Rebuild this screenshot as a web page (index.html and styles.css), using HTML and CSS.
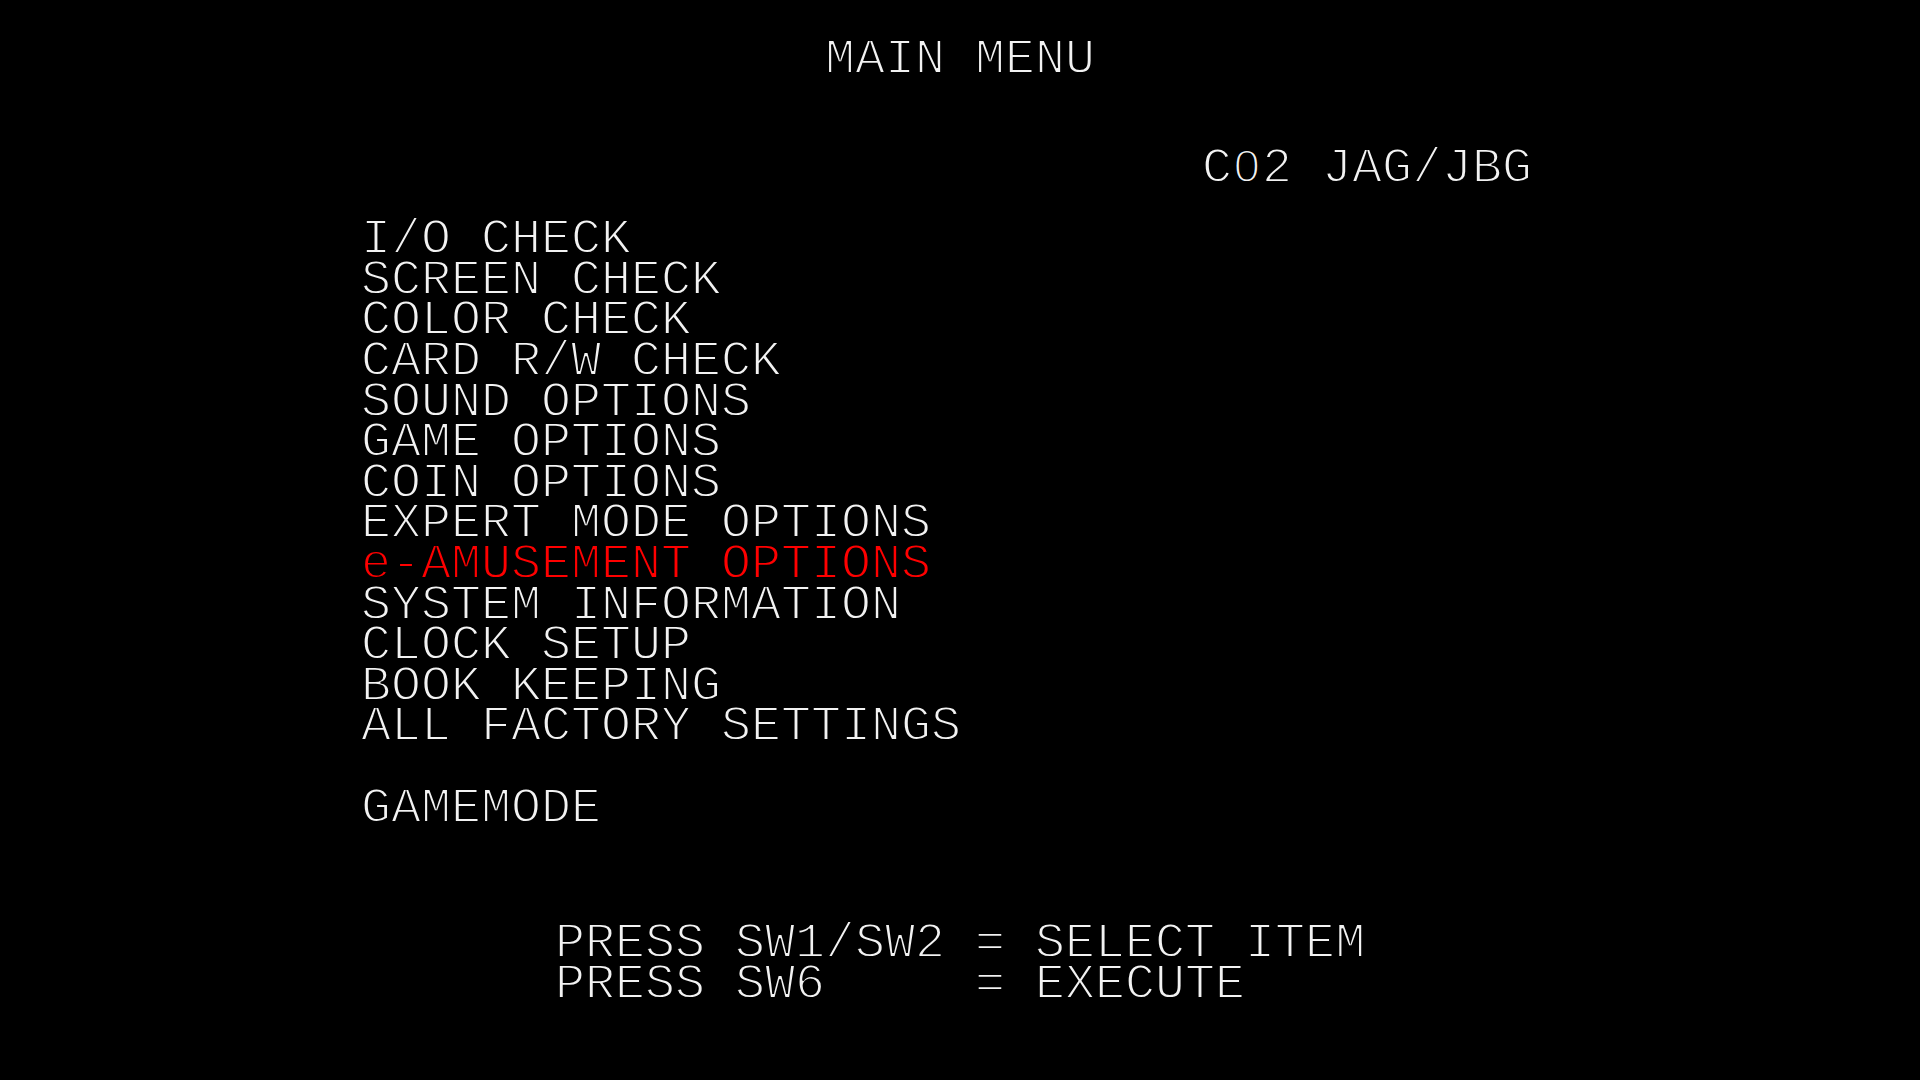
FILE: index.html
```html
<!DOCTYPE html>
<html>
<head>
<meta charset="utf-8">
<title>MAIN MENU</title>
<link rel="stylesheet" href="styles.css">
</head>
<body>
<div class="screen">
  <div class="title">MAIN MENU</div>
  <div class="version">C<span class="zero">0</span>2 JAG/JBG</div>
  <ul class="menu">
    <li>I/O CHECK</li>
    <li>SCREEN CHECK</li>
    <li>COLOR CHECK</li>
    <li>CARD R/W CHECK</li>
    <li>SOUND OPTIONS</li>
    <li>GAME OPTIONS</li>
    <li>COIN OPTIONS</li>
    <li>EXPERT MODE OPTIONS</li>
    <li class="selected">e-AMUSEMENT OPTIONS</li>
    <li>SYSTEM INFORMATION</li>
    <li>CLOCK SETUP</li>
    <li>BOOK KEEPING</li>
    <li>ALL FACTORY SETTINGS</li>
    <li class="gap">GAMEMODE</li>
  </ul>
  <div class="help">
    <div class="help-line">PRESS SW1/SW2 = SELECT ITEM</div>
    <div class="help-line">PRESS SW6     = EXECUTE</div>
  </div>
</div>
</body>
</html>
```
FILE: styles.css
```css
html, body {
  margin: 0;
  padding: 0;
  background: #000;
}
.screen {
  width: 1920px;
  height: 1080px;
  background: #000;
  color: #f2f2f2;
  font-family: "Liberation Mono", "DejaVu Sans Mono", monospace;
  font-size: 50px;
  line-height: 40.6px;
  -webkit-text-stroke: 1.8px #000;
  display: flex;
  flex-direction: column;
  padding-top: 40px;
  box-sizing: border-box;
  overflow: hidden;
}
.title {
  text-align: center;
  white-space: pre;
}
.version {
  margin-top: 68px;
  padding-left: 1202px;
  white-space: pre;
}
.zero {
  font-family: "Liberation Sans", sans-serif;
  font-size: 47px;
  line-height: 0;
  padding-left: 1.7px;
  letter-spacing: 2.2px;
}
.menu {
  list-style: none;
  margin: 31px 0 0 0;
  padding: 0 0 0 361px;
}
.menu li {
  white-space: pre;
}
.menu li.selected {
  color: #ff0000;
}
.menu li.gap {
  margin-top: 40.6px;
}
.help {
  margin-top: 95px;
  padding-left: 555px;
}
.help-line {
  white-space: pre;
}
```
